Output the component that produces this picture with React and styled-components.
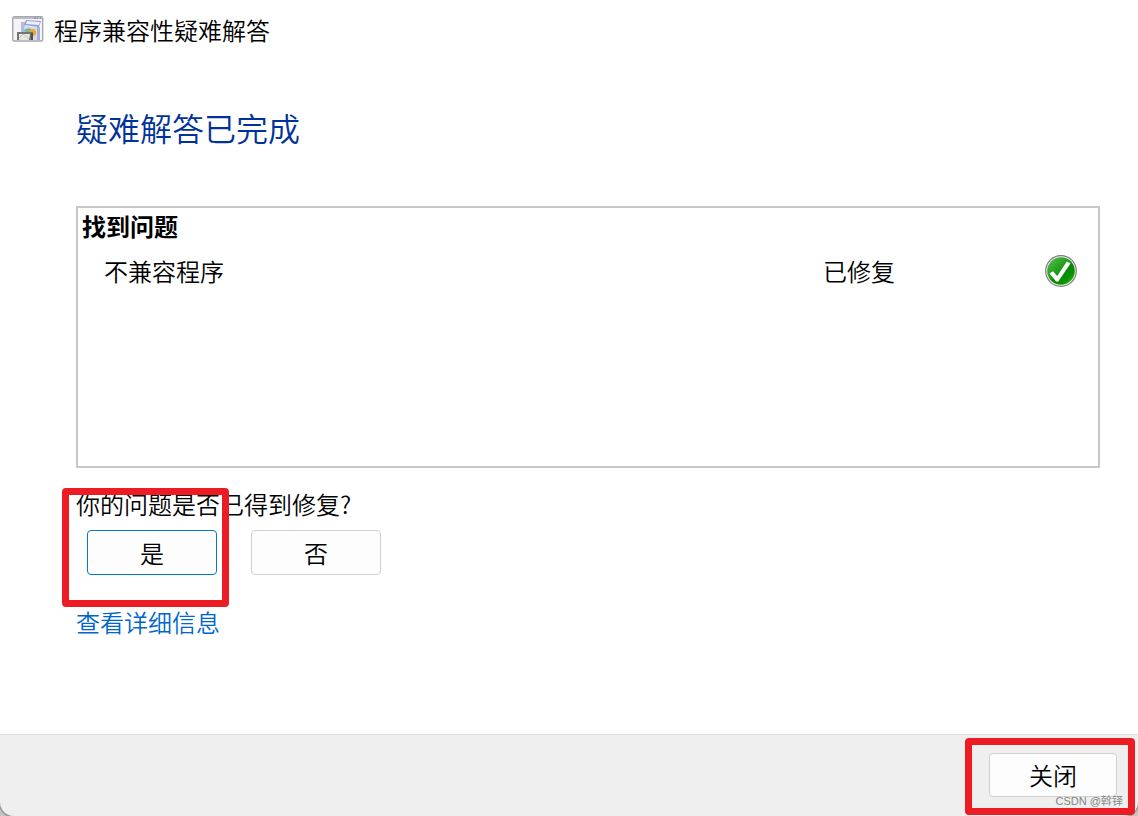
import styled, { createGlobalStyle } from 'styled-components'
import { useState } from 'react'

const GlobalStyle = createGlobalStyle`
  * {
    box-sizing: border-box;
  }
  body {
    margin: 0;
    background: #fff;
    color: #000;
    font-family: 'Noto Sans CJK SC', sans-serif;
    font-size: 24px;
    font-weight: 350;
    line-height: 32px;
  }
`
const Dialog = styled.div`
  position: relative;
  display: flex;
  flex-direction: column;
  min-height: 100vh;
  overflow: hidden;
  background: #c4c4c4;
`
const TitleBar = styled.header`
  display: flex;
  align-items: center;
  gap: 10px;
  padding: 14px 12px;
  background: #fff;
`
const TitleIcon = styled.svg`
  width: 32px;
  height: 26px;
  margin-bottom: 2px;
`
const Content = styled.main`
  flex: 1;
  padding: 43px 38px 0 76px;
  background: #fff;
`
const Heading = styled.h1`
  margin: 0 0 55px;
  color: #003399;
  font-size: 32px;
  font-weight: 350;
  line-height: 48px;
`
const ProblemPanel = styled.section`
  height: 262px;
  border: 2px solid #c8c8c8;
`
const ProblemTable = styled.table`
  width: 100%;
  border-collapse: collapse;
  table-layout: fixed;
  text-align: left;
`
const Column = styled.col`
  width: ${(props) => props.$width || 'auto'};
`
const GroupTitle = styled.th`
  padding: 2px 4px;
  font-weight: 700;
`
const Cell = styled.td`
  height: 54px;
  padding: 0 0 0 ${(props) => (props.$indent ? '26px' : '0')};
`
const StatusIcon = styled.svg`
  display: block;
  width: 32px;
  height: 32px;
`
const Feedback = styled.div`
  position: relative;
  margin: 20px 0 31px;
`
const Question = styled.div`
  margin-bottom: 10px;
`
const Answers = styled.div`
  display: flex;
  gap: 34px;
  padding-left: 11px;
`
const Button = styled.button`
  width: ${(props) => (props.$wide ? '130px' : '128px')};
  height: ${(props) => (props.$wide ? '45px' : '44px')};
  padding: 0;
  border: 1px solid ${(props) => (props.$active ? '#0078d4' : '#d0d0d0')};
  border-radius: 4px;
  background: #fdfdfd;
  color: #000;
  font: inherit;
`
const DetailLink = styled.a`
  color: #0066cc;
  text-decoration: none;
`
const Footer = styled.footer`
  display: flex;
  justify-content: flex-end;
  height: 82px;
  padding: 18px 21px 0;
  border-top: 1px solid #dfdfdf;
  border-radius: 0 0 14px 14px;
  background: #efefef;
  box-shadow: 0 1px 0 1px #999;
`
const Highlight = styled.span`
  position: absolute;
  top: ${(props) => props.$top};
  left: ${(props) => props.$left};
  width: ${(props) => props.$width};
  height: ${(props) => props.$height};
  border: 7px solid #ed1c24;
  border-radius: 4px;
  pointer-events: none;
`
const CloseWrapper = styled.div`
  position: relative;
`
const Watermark = styled.span`
  position: absolute;
  right: 15px;
  bottom: 6px;
  color: #858585;
  font-family: 'Liberation Sans', 'Noto Sans CJK SC', sans-serif;
  font-size: 11px;
  line-height: 18px;
`

function ProgramIcon() {
  return (
    <TitleIcon viewBox='0 0 32 26' aria-hidden='true'>
      <rect x='0.7' y='0.7' width='30' height='24.3' rx='1.5' fill='#f3f4f6' stroke='#a6a8ae' strokeWidth='1.4' />
      <path d='M1 2h29' stroke='#b9bcc4' strokeWidth='2' />
      <path d='M22 2h2M25 2h1M28 2h1' stroke='#777a82' />
      <path d='M9 6h4v10H9z' fill='#b5bddd' />
      <path d='M12 10l16 1v13H13z' fill='#d6d9ea' />
      <path d='M14 4l15 1-2 6-15-2z' fill='#959ed0' />
      <path d='M15 5l13 1-1 3-13-1z' fill='#eef0ff' />
      <path d='M25 11h3v13h-3z' fill='#a8b0d5' />
      <path d='M11 15q5-5 10-1l-3 3z' fill='#75b5a0' />
      <circle cx='20.5' cy='16.5' r='3.5' fill='#e9a72d' />
      <path d='M5 16h16v8H5z' fill='#747474' />
      <path d='M7 18h11l-1 6H7z' fill='#e2eade' />
      <path d='M7 22l4-4 6 5' fill='none' stroke='#e5b7b3' />
      <path d='M19 17h2v7h-2z' fill='#504e4c' />
    </TitleIcon>
  )
}

function FixedIcon() {
  return (
    <StatusIcon viewBox='0 0 32 32' role='img' aria-label='已修复'>
      <defs>
        <linearGradient id='green' x1='0' y1='0' x2='1' y2='1'>
          <stop offset='0' stopColor='#65bd55' />
          <stop offset='0.48' stopColor='#169b12' />
          <stop offset='0.52' stopColor='#078500' />
          <stop offset='0.75' stopColor='#099300' />
          <stop offset='1' stopColor='#35db18' />
        </linearGradient>
      </defs>
      <circle cx='16' cy='16' r='15.3' fill='#ededed' stroke='#7c7c7c' strokeWidth='1.2' />
      <circle cx='16' cy='16' r='13.8' fill='url(#green)' />
      <path d='M4.5 18.5l3.5-2.3 4.2 4.8L21.8 6.5l3.8 1.8L13.3 26.5h-2.2z' fill='#fff' />
    </StatusIcon>
  )
}

export default function App() {
  const [answer, setAnswer] = useState('yes')

  return (
    <>
      <GlobalStyle />
      <Dialog>
        <TitleBar>
          <ProgramIcon />
          <span>程序兼容性疑难解答</span>
        </TitleBar>
        <Content>
          <Heading>疑难解答已完成</Heading>
          <ProblemPanel>
            <ProblemTable>
              <colgroup>
                <Column />
                <Column $width='222px' />
                <Column $width='53px' />
              </colgroup>
              <thead>
                <tr>
                  <GroupTitle colSpan={3}>找到问题</GroupTitle>
                </tr>
              </thead>
              <tbody>
                <tr>
                  <Cell $indent>不兼容程序</Cell>
                  <Cell>已修复</Cell>
                  <Cell>
                    <FixedIcon />
                  </Cell>
                </tr>
              </tbody>
            </ProblemTable>
          </ProblemPanel>
          <Feedback role='group' aria-labelledby='question'>
            <Question id='question'>你的问题是否已得到修复?</Question>
            <Answers>
              <Button type='button' $wide $active={answer === 'yes'} onClick={() => setAnswer('yes')}>
                是
              </Button>
              <Button type='button' $wide $active={answer === 'no'} onClick={() => setAnswer('no')}>
                否
              </Button>
            </Answers>
            <Highlight $top='0' $left='-14px' $width='167px' $height='119px' />
          </Feedback>
          <DetailLink href='#details'>查看详细信息</DetailLink>
        </Content>
        <Footer>
          <CloseWrapper>
            <Button type='button'>关闭</Button>
            <Highlight $top='-15px' $left='-24px' $width='170px' $height='77px' />
          </CloseWrapper>
        </Footer>
        <Watermark>CSDN @斡铎</Watermark>
      </Dialog>
    </>
  )
}
